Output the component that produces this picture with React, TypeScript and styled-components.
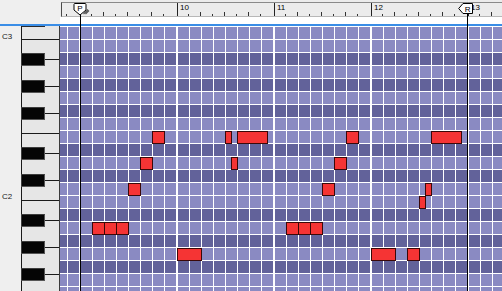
import styled, { createGlobalStyle } from 'styled-components';

// piano roll geometry (px)
const ROW_H = 13;
const BAR_W = 97;
const PITCHES = 21; // C3 down to E1
const BLACK_ROWS = [2, 4, 6, 9, 11, 14, 16, 18];
const EDGE_ROWS = [1, 8, 13, 20]; // C/B and F/E boundaries
const LABELS: Record<number, string> = { 0: 'C3', 12: 'C2' };
const BARS = [8, 9, 10, 11, 12, 13];

type Note = { row: number; bar: number; step: number; len: number };

const NOTES: Note[] = [
    { row: 8, bar: 0, step: 6, len: 1 },
    { row: 8, bar: 1, step: 4, len: 0.5 },
    { row: 8, bar: 1, step: 5, len: 2.5 },
    { row: 8, bar: 2, step: 6, len: 1 },
    { row: 8, bar: 3, step: 5, len: 2.5 },
    { row: 10, bar: 0, step: 5, len: 1 },
    { row: 10, bar: 1, step: 4.5, len: 0.5 },
    { row: 10, bar: 2, step: 5, len: 1 },
    { row: 12, bar: 0, step: 4, len: 1 },
    { row: 12, bar: 2, step: 4, len: 1 },
    { row: 12, bar: 3, step: 4.5, len: 0.5 },
    { row: 13, bar: 3, step: 4, len: 0.5 },
    { row: 15, bar: 0, step: 1, len: 1 },
    { row: 15, bar: 0, step: 2, len: 1 },
    { row: 15, bar: 0, step: 3, len: 1 },
    { row: 15, bar: 2, step: 1, len: 1 },
    { row: 15, bar: 2, step: 2, len: 1 },
    { row: 15, bar: 2, step: 3, len: 1 },
    { row: 17, bar: 1, step: 0, len: 2 },
    { row: 17, bar: 3, step: 0, len: 2 },
    { row: 17, bar: 3, step: 3, len: 1 },
];

// white cell lines of one bar: 2px bar line, then 1px line every 12px
const cellLines = () => {
    const stops = ['#fff 0 2px', 'transparent 2px 13px'];
    for (let k = 1; k < 8; k++) {
        const x = 1 + 12 * k;
        stops.push(`#fff ${x}px ${x + 1}px`, `transparent ${x + 1}px ${x + 12}px`);
    }
    return `linear-gradient(to right, ${stops.join(', ')})`;
};

const ticks = (from: number) => {
    const stops: string[] = [];
    for (let k = from; k < 8; k += 2) {
        const x = 12 * k;
        stops.push(`transparent ${x}px`, `#333 ${x}px ${x + 1}px`, `transparent ${x + 1}px`);
    }
    return `linear-gradient(to right, ${stops.join(', ')})`;
};

const GlobalStyle = createGlobalStyle`
    body {
        margin: 0;
        overflow: hidden;
        background: #efefef;
        font-family: "Liberation Sans", Arial, sans-serif;
    }
`;

export default function App() {
    return (
        <>
            <GlobalStyle />
            <Editor>
                <Corner />
                <RulerArea>
                    <Ruler>
                        <RulerTrack>
                            {BARS.map((b) => (
                                <RulerBar key={b}>{b > 9 ? b : ''}</RulerBar>
                            ))}
                        </RulerTrack>
                    </Ruler>
                    <RulerGap />
                </RulerArea>
                <BlueLine />

                <Keys>
                    <Labels>
                        {Array.from({ length: PITCHES }, (_, i) => (
                            <LabelRow key={i}>{LABELS[i] ?? ''}</LabelRow>
                        ))}
                    </Labels>
                    <Keyboard>
                        {Array.from({ length: PITCHES }, (_, i) =>
                            BLACK_ROWS.includes(i) ? (
                                <KeyRow key={i}>
                                    <BlackKey />
                                    <KeySplit />
                                </KeyRow>
                            ) : (
                                <KeyRow key={i} $edge={EDGE_ROWS.includes(i)} $stub={i === 0} />
                            )
                        )}
                    </Keyboard>
                </Keys>

                <GridArea>
                    {Array.from({ length: PITCHES }, (_, i) => (
                        <GridRow key={i} $dark={BLACK_ROWS.includes(i)} />
                    ))}
                    {NOTES.map((n, i) => (
                        <NoteBox
                            key={i}
                            style={{
                                left: 20 + BAR_W * n.bar + 12 * n.step,
                                top: 1 + ROW_H * n.row,
                                width: 12 * n.len + 1,
                            }}
                        />
                    ))}
                </GridArea>

                <Locator $x={80} $top={10} />
                <Locator $x={467} $top={13} />

                <Marker $x={73} viewBox="0 0 16 13" width={16} height={13}>
                    <path d="M1.5 0.5 H12 A1 1 0 0 1 13 1.5 V7 L7 12 L1 7 V1.5 A1 1 0 0 1 1.5 0.5 Z" fill="#fff" stroke="#000" />
                    <path d="M10.5 11 L15 6.5 M12.5 11 L16 7.5" stroke="#555" strokeWidth="1.2" />
                    <text x="7" y="8" fontSize="8" textAnchor="middle" fontFamily="Liberation Sans, sans-serif">P</text>
                </Marker>
                <Marker $x={458} viewBox="0 0 16 12" width={16} height={12}>
                    <path d="M5 0.5 H14.5 V10.5 H5 L0.7 5.5 Z" fill="#fff" stroke="#000" />
                    <text x="9.7" y="8.6" fontSize="8" textAnchor="middle" fontFamily="Liberation Sans, sans-serif">R</text>
                </Marker>
            </Editor>
        </>
    );
}

const Editor = styled.div`
    position: relative;
    width: 502px;
    height: 291px;
    overflow: hidden;
    display: grid;
    grid-template-columns: 60px 1fr;
    grid-template-rows: 24px 2px 1fr;
    background: #efefef;
`;

const Corner = styled.div`
    background: #efefef;
`;

const RulerArea = styled.div`
    display: flex;
    flex-direction: column;
    padding: 2px 0 0 1px;
    background: #ececec;
`;

const Ruler = styled.div`
    height: 15px;
    box-sizing: border-box;
    border-top: 1px solid #8a8a8a;
    border-left: 1px solid #4a4a4a;
    border-bottom: 1px solid #b8b8b8;
    overflow: hidden;
`;

const RulerTrack = styled.div`
    display: flex;
    margin-left: -79px;
    height: 100%;
`;

const RulerBar = styled.div`
    flex: 0 0 ${BAR_W}px;
    box-sizing: border-box;
    border-left: 1px solid #222;
    padding: 0 0 0 2px;
    font-size: 8px;
    line-height: 9px;
    color: #000;
    background-image: ${ticks(2)}, ${ticks(1)};
    background-origin: border-box;
    background-repeat: no-repeat;
    background-size: ${BAR_W}px 4px, ${BAR_W}px 2px;
    background-position: -1px 100%, -1px 100%;
`;

const RulerGap = styled.div`
    flex: 1;
    margin-left: -1px;
    background: #fff;
`;

const BlueLine = styled.div`
    grid-column: 1 / -1;
    background: #3a8de6;
`;

const Keys = styled.div`
    display: flex;
`;

const Labels = styled.div`
    width: 21px;
    display: flex;
    flex-direction: column;
`;

const LabelRow = styled.div`
    flex: 0 0 ${ROW_H}px;
    box-sizing: border-box;
    padding: 4px 0 0 2px;
    font-size: 8px;
    line-height: 13px;
    color: #1a1a1a;
`;

const Keyboard = styled.div`
    width: 39px;
    box-sizing: border-box;
    border-left: 1px solid #1a1a1a;
    border-right: 1px solid #3a3a3a;
    display: flex;
    flex-direction: column;
    background: #e6e6e6;
`;

const KeyRow = styled.div<{ $edge?: boolean; $stub?: boolean }>`
    flex: 0 0 ${ROW_H}px;
    display: flex;
    align-items: flex-start;
    box-shadow: ${(p) => (p.$edge ? 'inset 0 1px #1a1a1a' : 'none')};
    background: ${(p) =>
        p.$stub ? 'linear-gradient(#2a2a2a, #2a2a2a) no-repeat -1px 0 / 24px 1px, #e6e6e6' : '#e6e6e6'};
`;

const BlackKey = styled.div`
    width: 24px;
    height: 13px;
    margin: 1px 0 0 -1px;
    box-sizing: border-box;
    background: #050505;
    border: 1px solid #3c3c3c;
    border-right-color: #555;
    border-bottom-color: #555;
`;

const KeySplit = styled.div`
    flex: 1;
    height: 1px;
    margin-top: 7px;
    background: #1a1a1a;
`;

const GridArea = styled.div`
    position: relative;
    overflow: hidden;
    display: flex;
    flex-direction: column;
    gap: 1px;
    padding-top: 1px;
    background: #fff;
`;

const GridRow = styled.div<{ $dark: boolean }>`
    flex: 0 0 12px;
    background-color: ${(p) => (p.$dark ? '#62629a' : '#8a8ac2')};
    background-image: ${cellLines()};
    background-size: ${BAR_W}px 100%;
    background-position: 19px 0;
`;

const NoteBox = styled.div`
    position: absolute;
    height: 13px;
    box-sizing: border-box;
    background: #f53434;
    border: 1px solid #3a0808;
`;

const Locator = styled.div<{ $x: number; $top: number }>`
    position: absolute;
    left: ${(p) => p.$x}px;
    top: ${(p) => p.$top}px;
    bottom: 0;
    width: 1px;
    background: #000;
`;

const Marker = styled.svg<{ $x: number }>`
    position: absolute;
    left: ${(p) => p.$x}px;
    top: 3px;
    overflow: visible;
`;
